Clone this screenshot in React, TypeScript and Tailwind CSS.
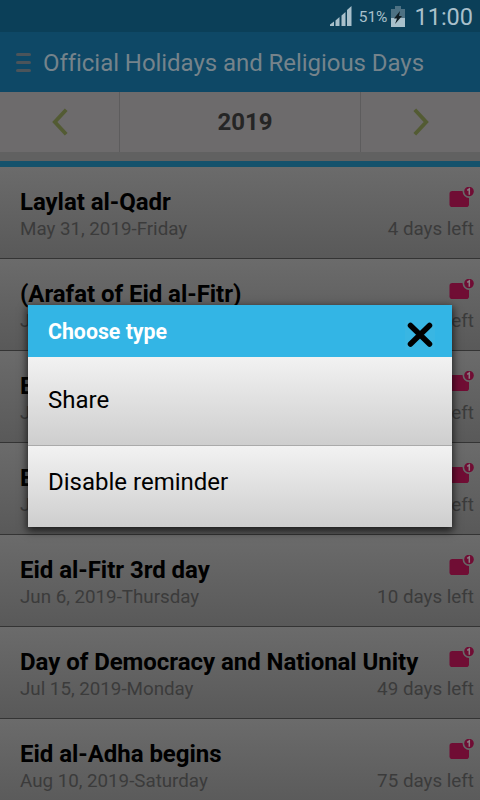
import React from "react";

type Holiday = { name: string; date: string; left: string };

const holidays: Holiday[] = [
  { name: "Laylat al-Qadr", date: "May 31, 2019-Friday", left: "4 days left" },
  { name: "(Arafat of Eid al-Fitr)", date: "Jun 3, 2019-Monday", left: "7 days left" },
  { name: "Eid al-Fitr 1st day", date: "Jun 4, 2019-Tuesday", left: "8 days left" },
  { name: "Eid al-Fitr 2nd day", date: "Jun 5, 2019-Wednesday", left: "9 days left" },
  { name: "Eid al-Fitr 3rd day", date: "Jun 6, 2019-Thursday", left: "10 days left" },
  { name: "Day of Democracy and National Unity", date: "Jul 15, 2019-Monday", left: "49 days left" },
  { name: "Eid al-Adha begins", date: "Aug 10, 2019-Saturday", left: "75 days left" },
];

function StatusBar() {
  return (
    <div className="flex h-8 items-center justify-end bg-[#0b3f58] pr-[7px] text-[#a9c0cb]">
      <svg width="22" height="20" viewBox="0 0 22 20" fill="currentColor">
        <path d="M0 20v-1.500l4-3V20zM5.500 20v-5.500l4-3.500v9zM11.500 20v-10.500l4-3.500v14zM17 20V4l4.500-4v20z" />
      </svg>
      <span className="ml-[7px] text-[15.500px] leading-8">
        <span className="relative top-px">51%</span>
      </span>
      <svg width="14" height="21" viewBox="0 0 14 21" className="ml-[4px]">
        <path d="M4 0h6v3h4v9H0V3h4z" fill="#4d7183" />
        <path d="M0 12h14v9H0z" fill="#a9c0cb" />
        <path d="M9 5 3 12.500h3L4 18l7-8H8z" fill="#101c22" />
      </svg>
      <span className="ml-[9px] text-[23.500px] leading-8">
        <span className="relative top-px">11:00</span>
      </span>
    </div>
  );
}

function Chevron({ flip }: { flip?: boolean }) {
  return (
    <svg width="16" height="28" viewBox="0 0 16 28" fill="none" stroke="#535b33" strokeWidth="3.800" className={flip ? "-scale-x-100" : ""}>
      <path d="M14.200 1.800 2.800 14l11.400 12.200" />
    </svg>
  );
}

function ReminderIcon() {
  return (
    <svg width="26" height="22" viewBox="0 0 26 22" className="shrink-0">
      <rect x="1.500" y="4" width="19.500" height="16" rx="2.800" fill="#700d34" />
      <circle cx="21" cy="4.500" r="6.400" fill="#676767" />
      <circle cx="21" cy="4.500" r="4.800" fill="#700d34" />
      <path d="M19.200 3.400 21.300 2v5.800" fill="none" stroke="#8a7a80" strokeWidth="1.500" />
    </svg>
  );
}

function HolidayRow({ name, date, left }: Holiday) {
  return (
    <li className="flex h-[92px] shrink-0 flex-col border-b border-[#343434] bg-gradient-to-b from-[#6b6b6b] to-[#595959] pt-5 pr-[6px] pl-5">
      <div className="flex h-7 items-start justify-between">
        <span className="text-[24px] leading-[30px] font-bold tracking-[-0.04px] whitespace-nowrap text-black">{name}</span>
        <ReminderIcon />
      </div>
      <div className="flex justify-between text-[18.800px] leading-[29px] text-[#3b3b3b]">
        <span className="tracking-[-0.02px]">{date}</span>
        <span>{left}</span>
      </div>
    </li>
  );
}

export default function App() {
  return (
    <div className="relative flex h-[800px] w-[480px] flex-col overflow-hidden bg-[#616161] font-[Roboto,sans-serif] [font-variant-ligatures:none]">
      <StatusBar />
      <header className="flex h-[60px] shrink-0 items-center bg-[#0e4866] pl-4">
        <div className="flex w-[15px] flex-col gap-[5px]">
          <span className="h-[3px] rounded-xs bg-[#4b545a]" />
          <span className="h-[3px] rounded-xs bg-[#4b545a]" />
          <span className="h-[3px] rounded-xs bg-[#4b545a]" />
        </div>
        <h1 className="mt-px ml-[12px] text-[24px] tracking-[-0.05px] whitespace-nowrap text-[#75838b]">Official Holidays and Religious Days</h1>
      </header>
      <div className="flex h-[60px] shrink-0 items-center bg-[#6d6b6c]">
        <div className="flex h-full w-[120px] items-center justify-center border-r border-[#5d5c5d]"><Chevron /></div>
        <div className="flex h-full flex-1 items-center justify-center pl-2.5 text-[24px] font-bold text-[#252525]">2019</div>
        <div className="flex h-full w-[120px] items-center justify-center border-l border-[#5d5c5d]"><Chevron flip /></div>
      </div>
      <div className="h-[9px] shrink-0 bg-[#616161]" />
      <div className="h-[6px] shrink-0 bg-[#14526c]" />
      <ul className="flex flex-col">
        {holidays.map((h) => <HolidayRow key={h.name} {...h} />)}
      </ul>

      <div role="dialog" className="absolute top-[305px] left-7 w-[424px] shadow-[0_3px_8px_1px_rgba(0,0,0,0.7)]">
        <div className="flex h-[52px] items-center justify-between bg-[#33b5e5] pr-[17px] pl-5">
          <h2 className="mt-px text-[21.300px] font-bold text-white">Choose type</h2>
          <svg width="30" height="30" viewBox="0 0 30 30" className="mt-2 bg-[#39b6e3]">
            <path d="M5.500 5.500l19 18.500M24.500 5.500l-19 18.500" stroke="black" strokeWidth="5.500" strokeLinecap="round" />
          </svg>
        </div>
        <div className="h-[89px] border-b border-[#aaa] bg-gradient-to-b from-[#f2f2f2] to-[#cecece] pt-7 pl-5 text-[24px] leading-[30px] text-black">Share</div>
        <div className="h-[81px] bg-gradient-to-b from-[#f2f2f2] to-[#cecece] pt-[21px] pl-5 text-[24px] leading-[30px] text-black">Disable reminder</div>
      </div>
    </div>
  );
}
